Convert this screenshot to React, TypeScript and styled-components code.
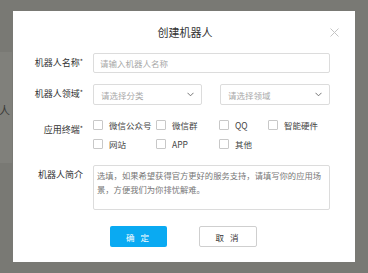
import styled, { createGlobalStyle } from "styled-components";

const GlobalStyle = createGlobalStyle`
  html, body {
    margin: 0;
    padding: 0;
  }
  body {
    font-family: "Noto Sans CJK SC", "Liberation Sans", sans-serif;
    color: #333;
  }
`;

const terminals = ["微信公众号", "微信群", "QQ", "智能硬件", "网站", "APP", "其他"];

const Chevron = () => (
  <svg width="7" height="5" viewBox="0 0 7 5">
    <polyline points="0.5,0.8 3.5,3.8 6.5,0.8" fill="none" stroke="#666" strokeWidth="0.9" />
  </svg>
);

const CloseIcon = () => (
  <svg width="9" height="9" viewBox="0 0 9 9">
    <path d="M0.5 0.5 L8.5 8.5 M8.5 0.5 L0.5 8.5" stroke="#c4c4c4" strokeWidth="1" />
  </svg>
);

interface FieldLabelProps {
  text: string;
  required?: boolean;
  offset?: number;
}

const FieldLabel = ({ text, required, offset = 0 }: FieldLabelProps) => (
  <Label $offset={offset}>
    {text}
    {required && <Star>*</Star>}
  </Label>
);

export default function App() {
  return (
    <Page>
      <GlobalStyle />
      <BackdropBand>
        <BandText>人</BandText>
      </BackdropBand>
      <Overlay>
        <Dialog>
          <Header>
            <Title>创建机器人</Title>
            <CloseButton>
              <CloseIcon />
            </CloseButton>
          </Header>
          <Form>
            <Row>
              <FieldLabel text="机器人名称" required />
              <TextInput placeholder="请输入机器人名称" />
            </Row>
            <Row>
              <FieldLabel text="机器人领域" required />
              <SelectPair>
                <Select>
                  <span>请选择分类</span>
                  <Chevron />
                </Select>
                <Select>
                  <span>请选择领域</span>
                  <Chevron />
                </Select>
              </SelectPair>
            </Row>
            <Row $top={10}>
              <FieldLabel text="应用终端" required offset={5} />
              <CheckGrid>
                {terminals.map((name) => (
                  <CheckItem key={name}>
                    <CheckBox />
                    <span>{name}</span>
                  </CheckItem>
                ))}
              </CheckGrid>
            </Row>
            <Row $top={12}>
              <FieldLabel text="机器人简介" offset={0} />
              <TextArea>
                选填，如果希望获得官方更好的服务支持，请填写你的应用场景，方便我们为你排忧解难。
              </TextArea>
            </Row>
          </Form>
          <Footer>
            <PrimaryButton>确 定</PrimaryButton>
            <GhostButton>取 消</GhostButton>
          </Footer>
        </Dialog>
      </Overlay>
    </Page>
  );
}

const Page = styled.div`
  position: relative;
  width: 368px;
  height: 273px;
  background: #797974;
  overflow: hidden;
`;

const BackdropBand = styled.div`
  margin-top: 52px;
  width: 12px;
  height: 111px;
  background: #80807b;
  display: flex;
  align-items: center;
`;

const BandText = styled.span`
  font-size: 11px;
  color: #3a3a38;
  margin: 4px 0 0 -1px;
`;

const Overlay = styled.div`
  position: absolute;
  inset: 0;
  padding: 11px 13px 11px 13px;
`;

const Dialog = styled.div`
  width: 342px;
  height: 251px;
  background: #fff;
  box-sizing: border-box;
  display: flex;
  flex-direction: column;
`;

const Header = styled.div`
  position: relative;
  height: 42px;
  display: flex;
  align-items: center;
  justify-content: center;
`;

const Title = styled.div`
  font-size: 11px;
  color: #333;
  margin-left: 2px;
`;

const CloseButton = styled.div`
  position: absolute;
  right: 16px;
  top: 17px;
  display: flex;
`;

const Form = styled.div`
  display: flex;
  flex-direction: column;
  padding-right: 25px;
`;

const Row = styled.div<{ $top?: number }>`
  display: grid;
  grid-template-columns: 70px 1fr;
  column-gap: 10px;
  align-items: start;
  margin-top: ${(p) => p.$top ?? 11}px;
  &:first-child {
    margin-top: 0;
  }
`;

const Label = styled.div<{ $offset: number }>`
  text-align: right;
  font-size: 9px;
  line-height: 20px;
  color: #333;
  padding-top: ${(p) => p.$offset}px;
  white-space: nowrap;
`;

const Star = styled.span`
  font-size: 7px;
  vertical-align: top;
  line-height: 16px;
`;

const TextInput = styled.input`
  box-sizing: border-box;
  height: 20px;
  width: 100%;
  border: 1px solid #dcdcdc;
  border-radius: 2px;
  padding: 0 6px;
  font-family: inherit;
  font-size: 8.5px;
  outline: none;
  &::placeholder {
    color: #a8a8a8;
  }
`;

const SelectPair = styled.div`
  display: grid;
  grid-template-columns: 109px 110px;
  justify-content: space-between;
`;

const Select = styled.div`
  box-sizing: border-box;
  height: 21px;
  border: 1px solid #dcdcdc;
  border-radius: 2px;
  padding: 0 7px 0 7px;
  display: flex;
  align-items: center;
  justify-content: space-between;
  font-size: 8.5px;
  color: #a8a8a8;
`;

const CheckGrid = styled.div`
  display: grid;
  grid-template-columns: 63px 63px 49px 1fr;
  grid-auto-rows: 19px;
`;

const CheckItem = styled.label`
  display: flex;
  align-items: center;
  gap: 6px;
  font-size: 8.5px;
  color: #444;
  white-space: nowrap;
`;

const CheckBox = styled.span`
  box-sizing: border-box;
  width: 10px;
  height: 10px;
  border: 1px solid #c8c8c8;
  border-radius: 1px;
  background: #fff;
  flex-shrink: 0;
`;

const TextArea = styled.div`
  box-sizing: border-box;
  height: 45px;
  border: 1px solid #dcdcdc;
  border-radius: 2px;
  padding: 2px 3px;
  font-size: 8.3px;
  line-height: 14px;
  color: #777;
`;

const Footer = styled.div`
  display: flex;
  gap: 32px;
  margin-top: 16px;
  padding-left: 97px;
`;

const ButtonBase = styled.div`
  box-sizing: border-box;
  width: 57px;
  height: 21px;
  border-radius: 2px;
  display: flex;
  align-items: center;
  justify-content: center;
  font-size: 8.5px;
  letter-spacing: 2px;
`;

const PrimaryButton = styled(ButtonBase)`
  background: #0aaaf2;
  color: #fff;
`;

const GhostButton = styled(ButtonBase)`
  width: 58px;
  background: #fff;
  border: 1px solid #cfcfcf;
  color: #333;
`;
